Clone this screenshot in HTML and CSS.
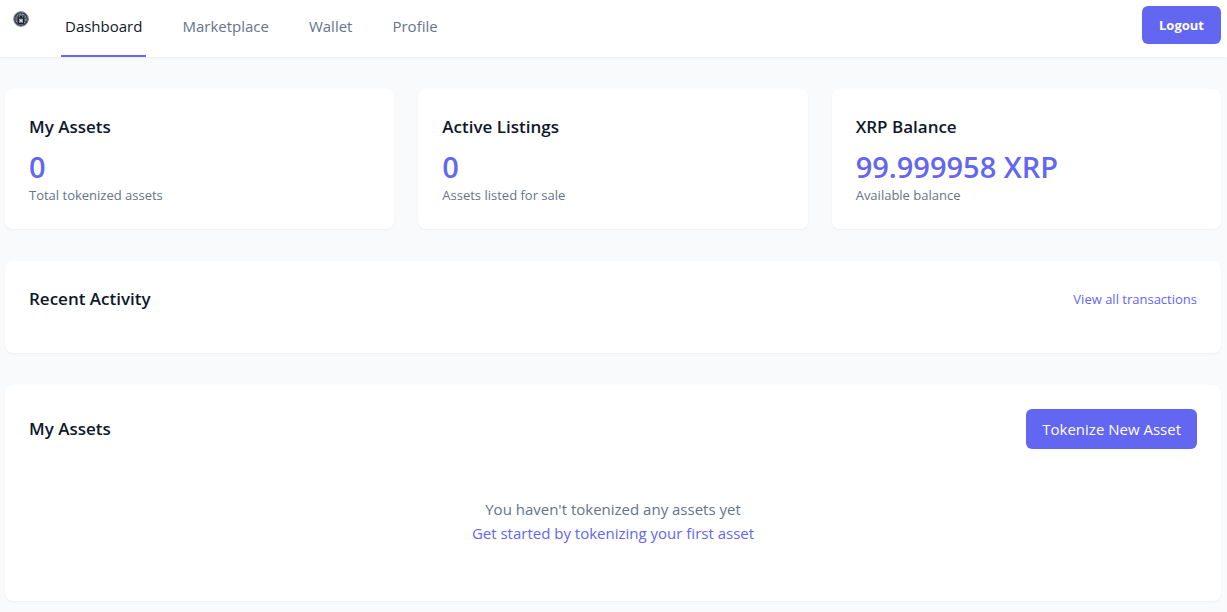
FILE: index.html
```html
<!DOCTYPE html>
<html lang="en">
<head>
<meta charset="utf-8">
<meta name="viewport" content="width=device-width, initial-scale=1">
<title>Dashboard</title>
<link rel="stylesheet" href="styles.css">
</head>
<body>
<header class="header">
  <div class="container header-inner">
    <a class="logo" href="#" aria-label="Home">
      <svg width="16" height="16" viewBox="0 0 48 48" aria-hidden="true">
        <circle cx="24" cy="24" r="22" fill="#3f4757" stroke="#7d8490" stroke-width="3"/>
        <circle cx="24" cy="24" r="15" fill="#4a5262" stroke="#a3aab5" stroke-width="3" stroke-dasharray="6 3"/>
        <path d="M15 39V20c0-6 4-9 9-9s9 3 9 9v19z" fill="#1b2331"/>
        <path d="M19 19v-2c0-3 2-5 5-5s5 2 5 5v2" fill="none" stroke="#c9ced6" stroke-width="2"/>
        <path d="M19 23h10v12H19z" fill="#b4bac4"/>
        <path d="M20 24l8 10M28 24l-8 10" fill="none" stroke="#f4f5f7" stroke-width="3"/>
        <path d="M24 23v3M24 32v3" fill="none" stroke="#1b2331" stroke-width="3"/>
      </svg>
    </a>
    <nav class="nav">
      <a class="nav-link active" href="#">Dashboard</a>
      <a class="nav-link" href="#">Marketplace</a>
      <a class="nav-link" href="#">Wallet</a>
      <a class="nav-link" href="#">Profile</a>
    </nav>
    <button class="button logout" type="button">Logout</button>
  </div>
</header>
<main class="container main">
  <div class="stats">
    <section class="card">
      <h2 class="title">My Assets</h2>
      <p class="value">0</p>
      <p class="note">Total tokenized assets</p>
    </section>
    <section class="card">
      <h2 class="title">Active Listings</h2>
      <p class="value">0</p>
      <p class="note">Assets listed for sale</p>
    </section>
    <section class="card">
      <h2 class="title">XRP Balance</h2>
      <p class="value">99.999958 XRP</p>
      <p class="note">Available balance</p>
    </section>
  </div>
  <section class="card">
    <div class="card-head">
      <h2 class="title">Recent Activity</h2>
      <a class="link small" href="#">View all transactions</a>
    </div>
  </section>
  <section class="card">
    <div class="card-head">
      <h2 class="title">My Assets</h2>
      <button class="button tokenize" type="button">Tokenize New Asset</button>
    </div>
    <div class="empty">
      <p>You haven't tokenized any assets yet</p>
      <a class="link" href="#">Get started by tokenizing your first asset</a>
    </div>
  </section>
</main>
</body>
</html>
```
FILE: styles.css
```css
* { box-sizing: border-box; }
body {
  margin: 0;
  background: #f8fafc;
  color: #0f172a;
  font: 15px/24px "Open Sans", "Noto Sans", sans-serif;
}
h2, p { margin: 0; }
a { text-decoration: none; }
.container { max-width: 1280px; margin: 0 auto; padding: 0 6px 0 5px; }
.header { background: #fff; box-shadow: 0 1px 2px rgba(0, 0, 0, 0.06); }
.header-inner { display: flex; align-items: flex-start; }
.logo { padding: 11px 8px; line-height: 0; }
.nav { display: flex; gap: 32px; margin-left: 24px; }
.nav-link {
  padding: 14px 4px 17px;
  border-bottom: 2px solid transparent;
  color: #64748b;
}
.nav-link.active { border-color: #6366f1; color: #0f172a; }
.button {
  border: 0;
  border-radius: 6px;
  background: #6366f1;
  color: #fff;
  font: inherit;
  cursor: pointer;
}
.logout {
  margin: 6px 0 0 auto;
  padding: 9px 17px;
  font-size: 13px;
  font-weight: 700;
  line-height: 20px;
}
.main { display: grid; gap: 32px; padding-top: 32px; padding-bottom: 11px; }
.stats { display: grid; grid-template-columns: repeat(3, 1fr); gap: 24px; }
.card {
  padding: 24px;
  border-radius: 8px;
  background: #fff;
  box-shadow: 0 1px 2px rgba(0, 0, 0, 0.05);
}
.title { font-size: 17px; font-weight: 600; line-height: 28px; }
.value {
  margin-top: 8px;
  color: #6366f1;
  font-size: 29px;
  font-weight: 600;
  line-height: 36px;
}
.note { color: #64748b; font-size: 13px; line-height: 20px; }
.card-head {
  display: flex;
  align-items: center;
  justify-content: space-between;
  margin-bottom: 16px;
}
.link { color: #6366f1; }
.small { font-size: 13px; line-height: 20px; }
.tokenize { padding: 8px 16px; }
.empty { padding: 32px 0; color: #64748b; text-align: center; }
```
